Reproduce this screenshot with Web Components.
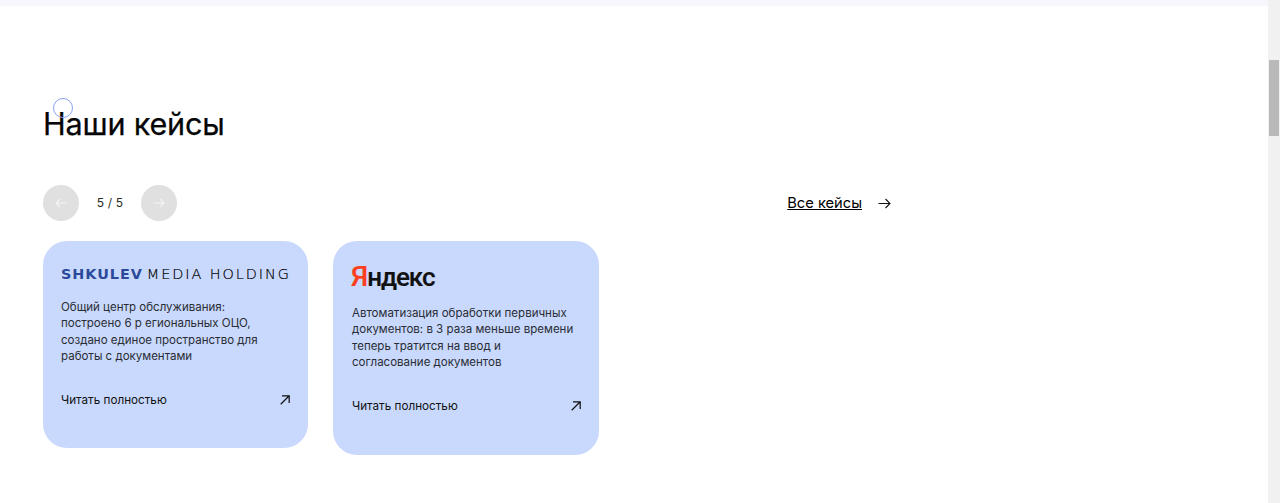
<!DOCTYPE html>
<html lang="ru">
<head>
<meta charset="utf-8">
<title>Наши кейсы</title>
<style>
  html, body { margin: 0; height: 503px; overflow: hidden; background: #fff; }
  body { font-family: "Inter", "Liberation Sans", sans-serif; color: #0b0b0b; }
  .shk { display: inline-flex; gap: 4px; }
  .shk b { color: #2b4a9b; font: 700 14.4px "DejaVu Sans", sans-serif; letter-spacing: .95px; }
  .shk span { color: #000; font: 200 14.4px "DejaVu Sans", sans-serif; letter-spacing: 1.95px; -webkit-text-stroke: .2px #000; }
  .ya { font: 500 26px "Roboto", "Liberation Sans", sans-serif; letter-spacing: -1.05px; color: #111; -webkit-text-stroke: .2px #111; }
  .ya i { font-style: normal; font-size: 28px; color: #fc3f1d; -webkit-text-stroke: .2px #fc3f1d; }
</style>
</head>
<body>
<cases-page>
  <cases-section>
    <case-card style="--card-w: 265px; --pad-l: 18px; --logo-h: 30px; --logo-gap: 10px; --pad-b: 40px;">
      <span slot="logo" class="shk"><b>SHKULEV</b><span>MEDIA HOLDING</span></span>
      Общий центр обслуживания: построено 6 р егиональных ОЦО, создано единое пространство для работы с документами
    </case-card>
    <case-card style="--card-w: 266px; --pad-l: 19px; --logo-h: 34px; --logo-gap: 12px; --pad-b: 41px;">
      <span slot="logo" class="ya" style="margin-left:-1px"><i>Я</i>ндекс</span>
      Автоматизация обработки первичных документов: в 3 раза меньше времени теперь тратится на ввод и согласование документов
    </case-card>
  </cases-section>
</cases-page>

<script>
class CasesPage extends HTMLElement {
  constructor() {
    super();
    const shadow = this.attachShadow({ mode: "open" });
    shadow.innerHTML = `
      <style>
        :host { display: flex; height: 503px; }
        .page { flex: 1; min-width: 0; display: flex; flex-direction: column; }
        .strip { height: 6px; background: #f6f6fc; }
        .scrollbar { width: 12px; background: #f1f1f1; }
        .thumb { margin: 60px 1px 0; height: 76px; background: #b9b9b9; }
      </style>
      <div class="page">
        <div class="strip"></div>
        <slot></slot>
      </div>
      <div class="scrollbar"><div class="thumb"></div></div>
    `;
  }
}

class CasesSection extends HTMLElement {
  constructor() {
    super();
    const shadow = this.attachShadow({ mode: "open" });
    shadow.innerHTML = `
      <style>
        :host { display: block; position: relative; padding: 98px 0 0 43px; }
        h2 {
          margin: 0;
          font: 400 30.6px/40px "Inter", sans-serif;
          letter-spacing: -0.2px;
          -webkit-text-stroke: 0.25px #060606;
          color: #060606;
        }
        /* focus ring that sits over the heading */
        .cursor {
          position: absolute;
          left: 53px;
          top: 92px;
          width: 18px;
          height: 18px;
          border: 1px solid #8a9ff2;
          border-radius: 50%;
        }
        .bar {
          display: flex;
          align-items: center;
          width: 848px;
          margin-top: 41px;
        }
        .round {
          width: 36px;
          height: 36px;
          border-radius: 50%;
          background: #e0e0e0;
          display: flex;
          align-items: center;
          justify-content: center;
        }
        .count {
          width: 62px;
          padding-bottom: 2px;
          text-align: center;
          font-size: 12px;
          letter-spacing: 0.2px;
          color: #2a2a1c;
        }
        .all {
          margin-left: auto;
          display: flex;
          align-items: center;
          gap: 16px;
          font-size: 14.7px;
          text-decoration: underline;
          color: #000;
        }
        .all span { margin-bottom: 1px; }
        .cards {
          display: flex;
          align-items: flex-start;
          gap: 25px;
          margin-top: 20px;
        }
      </style>
      <h2>Наши кейсы</h2>
      <div class="cursor"></div>
      <div class="bar">
        <div class="round">
          <svg width="12" height="10" viewBox="0 0 12 10" fill="none" stroke="#f4f4f4" stroke-width="1.1"><path d="M11.5 5H1M5 1 1 5l4 4"/></svg>
        </div>
        <div class="count">5 / 5</div>
        <div class="round">
          <svg width="12" height="10" viewBox="0 0 12 10" fill="none" stroke="#f4f4f4" stroke-width="1.1"><path d="M.5 5H11M7 1l4 4-4 4"/></svg>
        </div>
        <div class="all">
          <span>Все кейсы</span>
          <svg width="13" height="11" viewBox="0 0 13 11" fill="none" stroke="#111" stroke-width="1.1"><path d="M.5 5.5H12M7.5 1l4.5 4.5L7.5 10"/></svg>
        </div>
      </div>
      <div class="cards"><slot></slot></div>
    `;
  }
}

class CaseCard extends HTMLElement {
  constructor() {
    super();
    const shadow = this.attachShadow({ mode: "open" });
    shadow.innerHTML = `
      <style>
        :host {
          display: block;
          width: var(--card-w);
          box-sizing: border-box;
          padding: 18px 17px var(--pad-b) var(--pad-l);
          background: #c9d9fd;
          border-radius: 24px;
        }
        .logo {
          display: flex;
          align-items: center;
          height: var(--logo-h);
          white-space: nowrap;
        }
        .text {
          margin-top: var(--logo-gap);
          max-width: 224px;
          height: 66px;
          font-size: 11.52px;
          line-height: 16.4px;
          color: #2a2d35;
        }
        .more {
          display: flex;
          justify-content: space-between;
          align-items: center;
          margin-top: 27px;
          font-size: 11.7px;
          line-height: 16px;
          color: #111;
        }
        .more svg { margin-right: 1px; }
      </style>
      <div class="logo"><slot name="logo"></slot></div>
      <div class="text"><slot></slot></div>
      <div class="more">
        <span>Читать полностью</span>
        <svg width="10" height="10" viewBox="0 0 10 10" fill="none" stroke="#111" stroke-width="1.25"><path d="M.7 9.3 9.2.8M2 .8h7.2V8"/></svg>
      </div>
    `;
  }
}

customElements.define("cases-page", CasesPage);
customElements.define("cases-section", CasesSection);
customElements.define("case-card", CaseCard);
</script>
</body>
</html>
